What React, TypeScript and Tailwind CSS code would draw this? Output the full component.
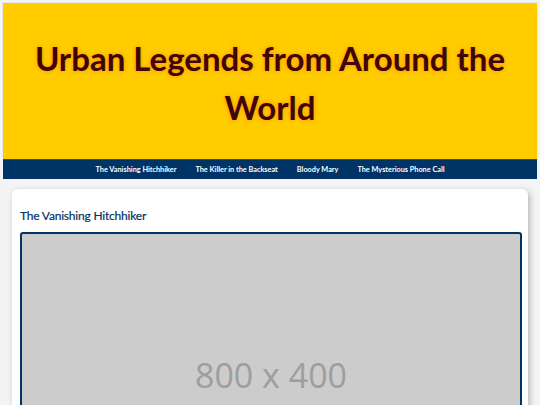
export default function App() {
  const nav = [
    "The Vanishing Hitchhiker",
    "The Killer in the Backseat",
    "Bloody Mary",
    "The Mysterious Phone Call",
  ];
  return (
    <div className="min-h-[405px] w-[540px] overflow-hidden bg-[#f4f4f4] p-[3px] font-['Lato',sans-serif]">
      <header className="flex h-[156px] items-center justify-center bg-[#ffcc00] px-[20px] pt-[4px] text-center shadow-[0_0_2px_rgba(0,0,0,0.15)]">
        <h1 className="text-[33px] font-bold leading-[49px] text-[#3f0606] [text-shadow:0_0_4px_#ff8800]">
          Urban Legends from Around the World
        </h1>
      </header>
      <nav className="flex h-[20px] items-center justify-center gap-[19px] border-t border-[#4a4a2a] bg-[#003366] pt-[2px] text-[7.3px] font-bold text-white">
        {nav.map((n) => (
          <span key={n}>{n}</span>
        ))}
      </nav>
      <main className="px-[9px] pt-[10px]">
        <section className="h-[300px] rounded-[6px] bg-white px-[8px] pt-[19px] shadow-[2px_2px_6px_rgba(0,0,0,0.25)]">
          <h2 className="mb-[8px] text-[12px] leading-[16px] tracking-[-0.2px] text-[#003366] [-webkit-text-stroke:0.2px_#003366]">The Vanishing Hitchhiker</h2>
          <div className="flex h-[251px] w-[502px] justify-center rounded-[3px] border-2 border-[#003366] bg-[#cccccc] pt-[118px] font-['Open_Sans',sans-serif] text-[34px] leading-[46px] text-[#9e9e9e]">
            800 x 400
          </div>
        </section>
      </main>
    </div>
  );
}
